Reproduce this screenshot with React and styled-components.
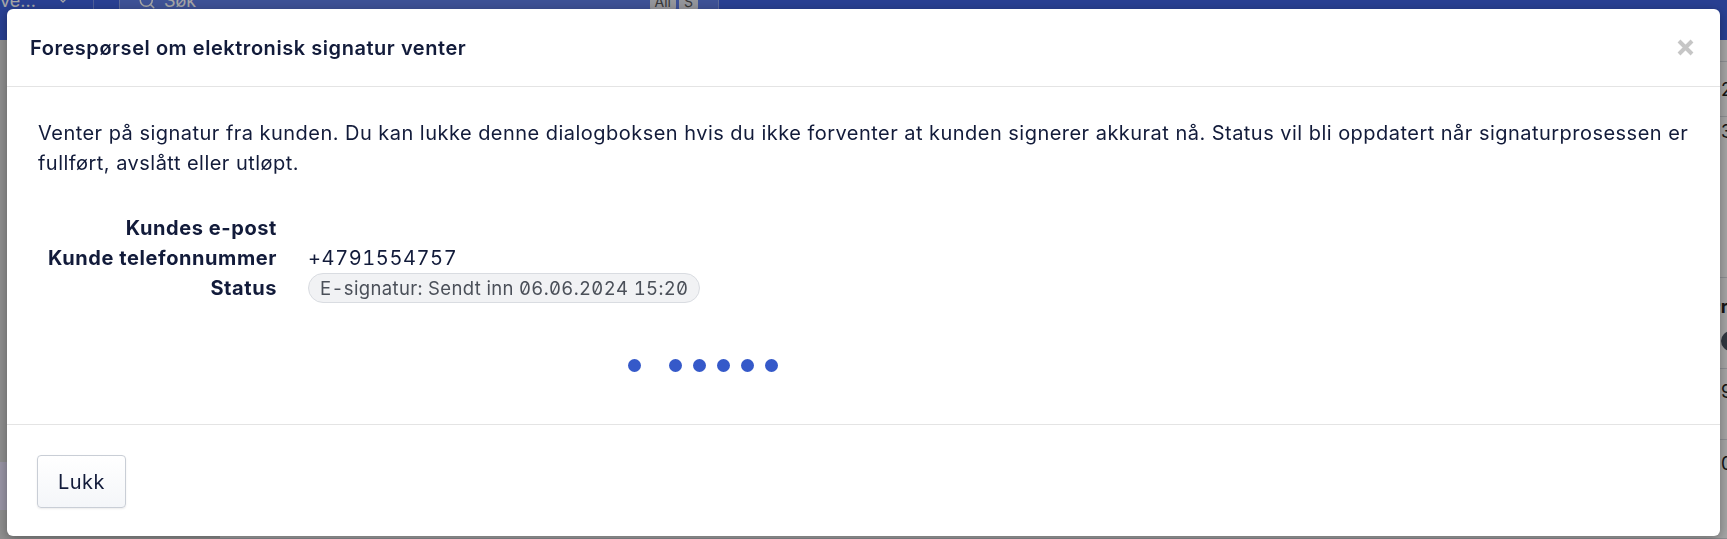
import React from "react";
import styled, { createGlobalStyle } from "styled-components";
import { Search, ChevronDown } from "lucide-react";

const GlobalStyle = createGlobalStyle`
  html, body { margin: 0; padding: 0; height: 100%; overflow: hidden; }
  body { font-family: Inter, "Noto Sans", sans-serif; background: #fff; color: #121b3a; }
  * { box-sizing: border-box; }
  #root { height: 100%; }
`;

/* ---------- underlying application (seen behind the overlay) ---------- */
const Page = styled.div`
  height: 539px;
  display: flex;
  flex-direction: column;
  background: #fff;
  overflow: hidden;
`;

const TopBar = styled.header`
  height: 40px;
  flex: none;
  display: flex;
  align-items: stretch;
  background: #3e62e1;
  color: #fff;
  font-size: 18px;
`;

const TeamSelect = styled.div`
  width: 94px;
  display: flex;
  align-items: flex-start;
  justify-content: space-between;
  padding: 0 22px 0 0;
  margin-top: -8px;
  border-right: 1px solid rgba(255, 255, 255, 0.3);
  line-height: 18px;
`;

const SearchBox = styled.div`
  margin-left: 25px;
  width: 600px;
  display: flex;
  align-items: flex-start;
  gap: 8px;
  padding: 0 20px 0 18px;
  background: #5f7ee7;
  border-left: 1px solid rgba(255, 255, 255, 0.3);
  border-right: 1px solid rgba(255, 255, 255, 0.3);
  line-height: 18px;
  & > * { margin-top: -8px; }
`;

const SearchLabel = styled.span`
  flex: 1;
`;

const KeyHint = styled.span`
  background: #e4e6ee;
  color: #555;
  font-size: 14px;
  padding: 0 5px;
  margin-left: 3px;
  border-radius: 2px;
`;

const Main = styled.div`
  flex: 1;
  display: flex;
`;

const Sidebar = styled.nav`
  width: 220px;
  background: #dcdcdc;
  display: flex;
  flex-direction: column;
  padding-top: 422px;
`;

const SideItem = styled.div`
  height: 48px;
  background: #ece6ff;
`;

const Content = styled.div`
  flex: 1;
  display: flex;
  flex-direction: column;
`;

const Row = styled.div`
  height: ${(p) => p.$h}px;
  display: grid;
  grid-template-columns: 1fr 6px;
  align-items: ${(p) => p.$align || "center"};
  border-bottom: 1px solid #dadde3;
  color: #222;
  font-size: 18px;
  font-weight: ${(p) => (p.$bold ? 700 : 400)};
  white-space: nowrap;
`;

const Cell = styled.div`
  display: flex;
  flex-direction: column;
  gap: 14px;
  padding-top: ${(p) => p.$top || 0}px;
  margin-left: ${(p) => p.$shift || 0}px;
`;

const Badge = styled.span`
  width: 20px;
  height: 20px;
  border-radius: 50%;
  background: #4b5563;
  margin-left: 12px;
`;

/* ---------- modal ---------- */
const Overlay = styled.div`
  position: fixed;
  inset: 0;
  background: rgba(0, 0, 0, 0.35);
  padding: 9px 7px 3px 7px;
  display: flex;
`;

const Modal = styled.div`
  flex: 1;
  background: #fff;
  border-radius: 6px;
  display: flex;
  flex-direction: column;
  box-shadow: 0 3px 12px rgba(0, 0, 0, 0.35);
  overflow: hidden;
`;

const Header = styled.div`
  height: 78px;
  flex: none;
  display: flex;
  align-items: center;
  padding: 0 25px 0 23px;
  border-bottom: 1px solid #e4e4e4;
`;

const Title = styled.h2`
  margin: 0;
  flex: 1;
  font-size: 20px;
  letter-spacing: 0.55px;
  font-weight: 600;
  color: #121b3a;
`;

const CloseButton = styled.button`
  border: 0;
  background: none;
  padding: 0;
  width: 19px;
  height: 19px;
  display: flex;
  cursor: pointer;
`;

const Body = styled.div`
  flex: 1;
  padding: 31px 31px 0 31px;
`;

const Lead = styled.p`
  margin: 0 0 35px;
  font-size: 20px;
  letter-spacing: 0.47px;
  line-height: 30px;
  color: #121b3a;
`;

const Details = styled.dl`
  margin: 0;
  display: grid;
  grid-template-columns: 239px auto;
  column-gap: 31px;
  align-items: baseline;
  justify-content: start;
  font-size: 20px;
  line-height: 30px;
`;

const Term = styled.dt`
  text-align: right;
  font-weight: 700;
  letter-spacing: 0.58px;
  color: #121b3a;
  white-space: nowrap;
`;

const Value = styled.dd`
  margin: 0;
  color: #121b3a;
  white-space: nowrap;
  letter-spacing: 0.6px;
  font-feature-settings: "tnum" 1;
`;

const Pill = styled.span`
  display: inline-flex;
  align-items: center;
  height: 30px;
  padding: 0 11px;
  border: 1px solid #d9dce1;
  border-radius: 15px;
  background: #f1f2f4;
  color: #4b5059;
  font-size: 18.5px;
  letter-spacing: 0.35px;
`;

const Mono = styled.span`
  font-feature-settings: "tnum" 1, "zero" 1;
  margin-left: 0.28em;
`;

const Dots = styled.div`
  display: flex;
  gap: 11px;
  padding-left: 590px;
  margin-top: 56px;
`;

const Dot = styled.span`
  width: 13px;
  height: 13px;
  border-radius: 50%;
  background: #3559c9;
  margin-right: ${(p) => (p.$lead ? 17 : 0)}px;
`;

const Footer = styled.div`
  flex: none;
  border-top: 1px solid #e4e4e4;
  padding: 30px 30px 28px;
  display: flex;
`;

const Button = styled.button`
  width: 89px;
  height: 53px;
  font-family: inherit;
  font-size: 20px;
  letter-spacing: 0.5px;
  color: #121b3a;
  border: 1px solid #c9ced6;
  border-radius: 4px;
  background: linear-gradient(#ffffff, #f4f6f9);
  box-shadow: 0 1px 2px rgba(0, 0, 0, 0.08);
  cursor: pointer;
`;

export default function App() {
  return (
    <>
      <GlobalStyle />
      <Page>
        <TopBar>
          <TeamSelect>
            <span>ve...</span>
            <ChevronDown size={16} />
          </TeamSelect>
          <SearchBox>
            <Search size={18} />
            <SearchLabel>Søk</SearchLabel>
            <span>
              <KeyHint>All</KeyHint>
              <KeyHint>S</KeyHint>
            </span>
          </SearchBox>
        </TopBar>
        <Main>
          <Sidebar>
            <SideItem />
          </Sidebar>
          <Content>
            <Row $h={22} />
            <Row $h={55}>
              <span />
              <span>23</span>
            </Row>
            <Row $h={161} $align="start">
              <span />
              <Cell $top={4}>
                <span>3:</span>
              </Cell>
            </Row>
            <Row $h={91} $bold $align="start">
              <span />
              <Cell $top={18} $shift={-12}>
                <span>Pri</span>
                <Badge />
              </Cell>
            </Row>
            <Row $h={71} $align="start">
              <span />
              <Cell $top={12}>
                <span>9</span>
              </Cell>
            </Row>
            <Row $h={99} $align="start">
              <span />
              <Cell $top={13}>
                <span>0</span>
              </Cell>
            </Row>
          </Content>
        </Main>
      </Page>
      <Overlay>
        <Modal role="dialog" aria-modal="true">
          <Header>
            <Title>Forespørsel om elektronisk signatur venter</Title>
            <CloseButton aria-label="Lukk">
              <svg width="19" height="19" viewBox="0 0 19 19">
                <path d="M3 3 L16 16 M16 3 L3 16" stroke="#c6c6c6" strokeWidth="4" />
              </svg>
            </CloseButton>
          </Header>
          <Body>
            <Lead>
              Venter på signatur fra kunden. Du kan lukke denne dialogboksen hvis du ikke forventer at kunden signerer
              akkurat nå. Status vil bli oppdatert når signaturprosessen er fullført, avslått eller utløpt.
            </Lead>
            <Details>
              <Term>Kundes e-post</Term>
              <Value />
              <Term>Kunde telefonnummer</Term>
              <Value>+4791554757</Value>
              <Term>Status</Term>
              <Value>
                <Pill>
                  E-signatur: Sendt inn<Mono>06.06.2024 15:20</Mono>
                </Pill>
              </Value>
            </Details>
            <Dots>
              <Dot $lead />
              <Dot />
              <Dot />
              <Dot />
              <Dot />
              <Dot />
            </Dots>
          </Body>
          <Footer>
            <Button>Lukk</Button>
          </Footer>
        </Modal>
      </Overlay>
    </>
  );
}
